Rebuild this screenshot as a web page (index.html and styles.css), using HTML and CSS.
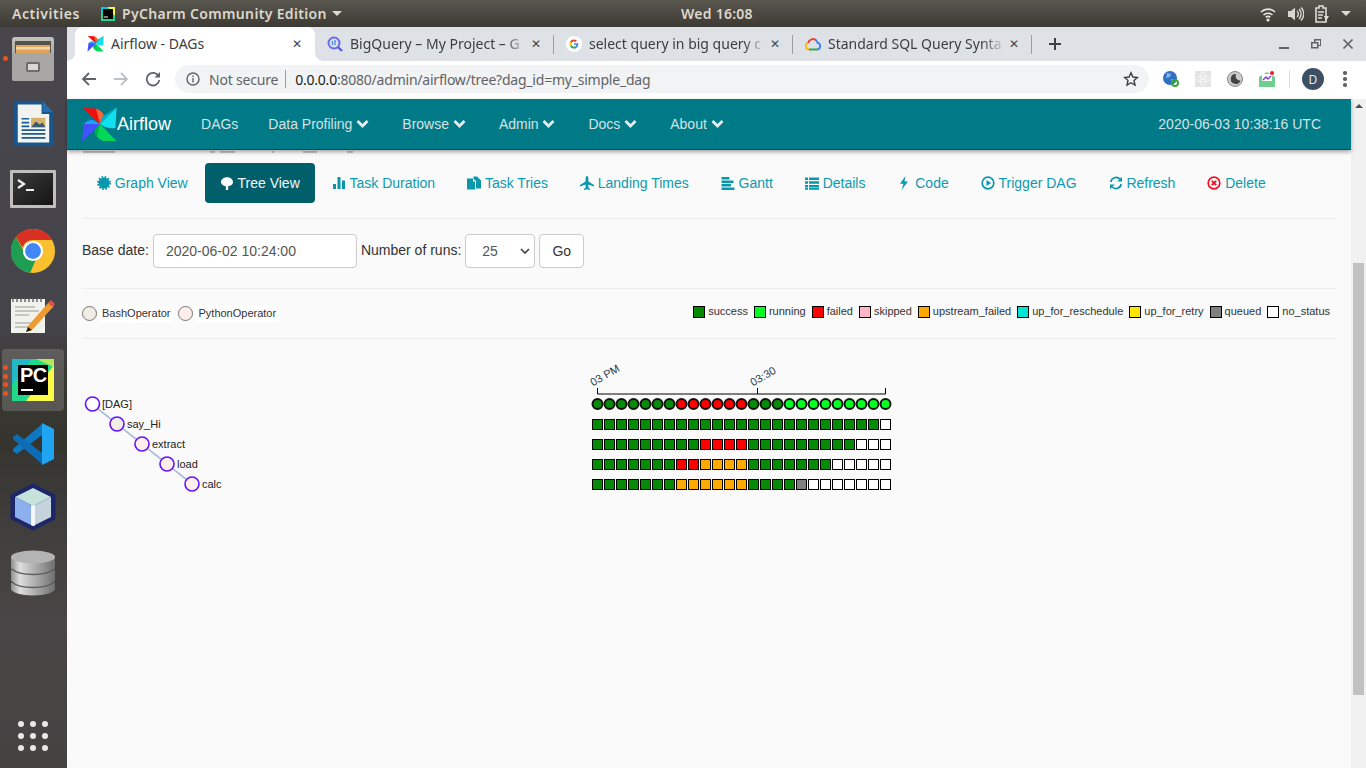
FILE: index.html
```html
<!DOCTYPE html>
<html lang="en">
<head>
<meta charset="utf-8">
<title>Airflow - DAGs</title>
<link rel="stylesheet" href="styles.css">
</head>
<body>
<div class="screen">
  <header class="topbar">
    <div class="top-left">
      <span class="activities">Activities</span>
      <svg class="top-app-icon" width="14" height="14" viewBox="0 0 14 14"><rect width="14" height="14" fill="#21d789"/><path d="M7 0h7v9z" fill="#fcf84a"/><path d="M0 0h7L0 7z" fill="#07c3f2"/><rect x="2" y="2" width="10" height="10" fill="#000"/><rect x="3" y="9.500" width="4" height="1" fill="#fff"/></svg>
      <span class="appname">PyCharm Community Edition</span>
      <span class="caret"></span>
    </div>
    <span class="clock">Wed 16:08</span>
    <div class="top-right">
      <svg width="18" height="16" viewBox="0 0 18 16"><path d="M2 6a10 10 0 0 1 14 0M4.500 9a6.500 6.500 0 0 1 9 0" fill="none" stroke="#e8e6df" stroke-width="1.600"/><path d="M6.800 11.300a3.400 3.400 0 0 1 4.400 0" fill="none" stroke="#e8e6df" stroke-width="1.600"/><circle cx="9" cy="14" r="1.600" fill="#e8e6df"/></svg>
      <svg width="16" height="16" viewBox="0 0 16 16"><path d="M0 5h3l4-3.500v13L3 11H0z" fill="#d8d6cf"/><path d="M9 5a4 4 0 0 1 0 6M11 3a7 7 0 0 1 0 10M13 1.500a9 9 0 0 1 0 13" fill="none" stroke="#d8d6cf" stroke-width="1.400"/></svg>
      <svg width="15" height="18" viewBox="0 0 15 18"><path d="M1 3h3V1h4v2h3v14H1z" fill="none" stroke="#e0ded7" stroke-width="1.600"/><path d="M3 7h6M3 10h5M3 13h4" stroke="#e0ded7" stroke-width="1.400"/><path d="M9 11l5 0-3 5z" fill="#e0ded7"/></svg>
      <span class="caret"></span>
    </div>
  </header>
  <div class="desktop">
    <nav class="dock">
      <div class="dock-item dock-files">
        <i class="run-dot"></i>
        <svg width="42" height="44" viewBox="0 0 42 44"><defs><linearGradient id="cab" x1="0" y1="0" x2="0" y2="1"><stop offset="0" stop-color="#c4c2bd"/><stop offset="1" stop-color="#8d8b87"/></linearGradient></defs><rect x="0" y="0" width="42" height="44" rx="3" fill="url(#cab)"/><rect x="3" y="4" width="36" height="12" fill="#55524e"/><rect x="4" y="8" width="34" height="8" fill="#e0a35a"/><rect x="4" y="10" width="34" height="2.500" fill="#f3d9a8"/><rect x="0" y="16" width="42" height="28" rx="2" fill="#a9a7a3"/><rect x="14" y="25" width="14" height="10" rx="2" fill="#6f6d6a"/><rect x="16" y="27" width="10" height="6" fill="#d9d7d3"/></svg>
      </div>
      <div class="dock-item dock-writer">
        <svg width="40" height="47" viewBox="0 0 42 48"><path d="M1 2a2 2 0 0 1 2-2h27l12 12v34a2 2 0 0 1-2 2H3a2 2 0 0 1-2-2z" fill="#18568c"/><path d="M5 4h25v10h8v30H5z" fill="#f3f3f0"/><path d="M31 0l11 12H31z" fill="#236fae"/><rect x="19" y="18" width="15" height="10" fill="#d4b36e"/><path d="M19 28l5-6 4 3 3-2 3 5z" fill="#3c5a6e"/><path d="M9 19h8M9 23h8M9 27h8M9 31h25M9 35h25M9 39h25" stroke="#1d5a8e" stroke-width="1.800"/></svg>
      </div>
      <div class="dock-item dock-term">
        <svg width="46" height="38" viewBox="0 0 46 38"><defs><linearGradient id="term" x1="0" y1="0" x2="1" y2="1"><stop offset="0" stop-color="#3c3c3c"/><stop offset="1" stop-color="#141414"/></linearGradient></defs><rect x="0" y="0" width="46" height="38" rx="1" fill="#bfbfbc"/><rect x="3" y="3" width="40" height="32" fill="url(#term)"/><path d="M8 10l6 4-6 4" fill="none" stroke="#f0f0f0" stroke-width="2.200"/><rect x="16" y="19" width="8" height="2" fill="#f0f0f0"/></svg>
      </div>
      <div class="dock-item dock-chrome">
        <svg width="44" height="44" viewBox="0 0 48 48"><circle cx="24" cy="24" r="24" fill="#fbc02d"/><path d="M24 0a24 24 0 0 1 20.800 12H24a12 12 0 0 0-11.400 8.200L5.200 8.600A24 24 0 0 1 24 0z" fill="#d93025"/><path d="M5.200 8.600l11 19.400a9 9 0 0 0 11 5L21 47.800A24 24 0 0 1 5.200 8.600z" fill="#1e9e50"/><circle cx="24" cy="24" r="11" fill="#fff"/><circle cx="24" cy="24" r="8.600" fill="#4285f4"/></svg>
      </div>
      <div class="dock-item dock-notes">
        <svg width="46" height="38" viewBox="0 0 46 38"><rect x="1" y="3" width="34" height="34" fill="#f2f2ec"/><path d="M3 1v5M7 1v5M11 1v5M15 1v5M19 1v5M23 1v5M27 1v5M31 1v5" stroke="#555" stroke-width="1.300"/><path d="M5 11h20M5 15h24M5 19h14M5 27h22M5 31h16" stroke="#9a9a94" stroke-width="1"/><path d="M18 30L39 6l5 4-22 24-6 2z" fill="#ef9b2d"/><path d="M38 7l3-3 4 4-3 3z" fill="#d9534f"/><path d="M16 36l2-5 4 3z" fill="#222"/></svg>
      </div>
      <div class="dock-item dock-pc">
        <i class="run-dots"><b></b><b></b><b></b><b></b></i>
        <svg width="42" height="42" viewBox="0 0 42 42"><rect width="42" height="42" fill="#21d789"/><path d="M24 0h18v8z" fill="#b4e85a"/><path d="M42 6v36H14z" fill="#fcf84a"/><path d="M0 0h20L0 26z" fill="#20b9c5"/><rect x="6" y="6" width="30" height="30" fill="#000"/><text x="8" y="23" class="pc-text">PC</text><rect x="9" y="30" width="12" height="2" fill="#fff"/></svg>
      </div>
      <div class="dock-item dock-code">
        <svg width="42" height="42" viewBox="0 0 42 42"><path d="M30 1L30 12 5 31 1 28V26z" fill="#0f78c2"/><path d="M30 41V30L5 11 1 14V16z" fill="#0d6cb3"/><path d="M30 0l12 6v30l-12 6z" fill="#1fa5f2"/></svg>
      </div>
      <div class="dock-item dock-cube">
        <svg width="46" height="48" viewBox="0 0 46 48"><path class="cube-outer" d="M23 2.500L43.500 13V35L23 45.500 2.500 35V13z"/><path d="M23 5l18 9-18 9L5 14z" fill="#c6e2dc"/><path d="M5 14l18 9v20L5 34z" fill="#8cb0ee"/><path d="M23 23l18-9v20L23 43z" fill="#c5d4dc"/><path d="M21 22.500l4-.5v20.500l-2 .5-2-1z" fill="#f4f8fb"/></svg>
      </div>
      <div class="dock-item dock-db">
        <svg width="44" height="46" viewBox="0 0 44 46"><defs><linearGradient id="dbg" x1="0" y1="0" x2="1" y2="0"><stop offset="0" stop-color="#8f8f8f"/><stop offset=".2" stop-color="#dedede"/><stop offset="1" stop-color="#6f6f6f"/></linearGradient></defs><path d="M0 33v6c0 3 10 6.500 22 6.500S44 42 44 39v-6z" fill="url(#dbg)"/><path d="M0 20v10c0 3 10 6 22 6s22-3 22-6V20z" fill="url(#dbg)"/><path d="M0 7v11c0 3 10 6 22 6s22-3 22-6V7z" fill="url(#dbg)"/><ellipse cx="22" cy="7" rx="22" ry="6.500" fill="#b4b4b4"/><path d="M1 19c3 3 11 5.500 21 5.500S40 22 43 19M1 32c3 3 11 5.500 21 5.500S40 35 43 32" fill="none" stroke="#5e5d5d" stroke-width="1.400"/></svg>
      </div>
      <div class="app-grid"><i></i><i></i><i></i><i></i><i></i><i></i><i></i><i></i><i></i></div>
    </nav>
    <div class="browser">
      <div class="tabstrip">
        <div class="tab active">
          <svg class="fav" width="17" height="17" viewBox="0 0 36 36"><use href="#pinwheel"/></svg>
          <span class="tab-title">Airflow - DAGs</span>
          <span class="tab-x">✕</span>
        </div>
        <div class="tab">
          <svg class="fav" width="16" height="16" viewBox="0 0 16 16"><circle cx="7" cy="7" r="5.500" fill="none" stroke="#6a6ce8" stroke-width="2"/><path d="M11 11l4 4" stroke="#5b5fdc" stroke-width="2.400"/><path d="M5.500 5v4M8 4v5" stroke="#4285f4" stroke-width="1.300"/></svg>
          <span class="tab-title">BigQuery – My Project – G</span>
          <span class="tab-x">✕</span>
        </div>
        <i class="tab-sep"></i>
        <div class="tab">
          <svg class="fav" width="16" height="16" viewBox="0 0 16 16"><circle cx="8" cy="8" r="8" fill="#fff"/><path d="M8 3.600a4.400 4.400 0 0 1 3 1.200l-1.300 1.300A2.600 2.600 0 0 0 5.600 7L4 5.800A4.400 4.400 0 0 1 8 3.600z" fill="#ea4335"/><path d="M4 5.800L5.600 7a2.700 2.700 0 0 0 0 2L4 10.200a4.500 4.500 0 0 1 0-4.400z" fill="#fbbc05"/><path d="M4 10.200L5.600 9a2.600 2.600 0 0 0 3.900 1.200l1.500 1.200A4.400 4.400 0 0 1 4 10.200z" fill="#34a853"/><path d="M12.300 8.100c0 1.400-.5 2.500-1.300 3.300L9.500 10.200c.5-.3.8-.8.9-1.400H8V7.300h4.200z" fill="#4285f4"/></svg>
          <span class="tab-title">select query in big query c</span>
          <span class="tab-x">✕</span>
        </div>
        <i class="tab-sep"></i>
        <div class="tab">
          <svg class="fav" width="16" height="16" viewBox="0 0 16 16"><path d="M4 13.500a3.500 3.500 0 0 1-.6-6.900" fill="none" stroke="#fbbc05" stroke-width="2"/><path d="M3.200 7A4.800 4.800 0 0 1 11 4.200" fill="none" stroke="#ea4335" stroke-width="2"/><path d="M10.600 4a4.500 4.500 0 0 1 2 2.800 3.400 3.400 0 0 1-.6 6.700" fill="none" stroke="#4285f4" stroke-width="2"/><path d="M4 13.500h8" stroke="#34a853" stroke-width="2"/></svg>
          <span class="tab-title">Standard SQL Query Synta</span>
          <span class="tab-x">✕</span>
        </div>
        <i class="tab-sep"></i>
        <svg class="new-tab" width="14" height="14" viewBox="0 0 14 14"><path d="M7 1v12M1 7h12" stroke="#3c4043" stroke-width="2"/></svg>
        <div class="win-ctrls">
          <svg width="12" height="12" viewBox="0 0 12 12"><rect x="1" y="9" width="10" height="2" fill="#5f6368"/></svg>
          <svg width="12" height="12" viewBox="0 0 12 12"><path d="M4 1h7v7H8.500v2.500H1V4h3z M5.500 2.500V4h3v3H10V2.500z" fill="#5f6368" fill-rule="evenodd"/><rect x="2.500" y="5.500" width="4.500" height="3.500" fill="#dee1e6"/></svg>
          <svg width="12" height="12" viewBox="0 0 12 12"><path d="M1.500 1.500l9 9M10.500 1.500l-9 9" stroke="#5f6368" stroke-width="1.700"/></svg>
        </div>
      </div>
      <div class="toolbar">
        <svg class="tb-btn" width="16" height="16" viewBox="0 0 16 16"><path d="M15 8H2M8 2L2 8l6 6" fill="none" stroke="#5f6368" stroke-width="1.800"/></svg>
        <svg class="tb-btn" width="16" height="16" viewBox="0 0 16 16"><path d="M1 8h13M8 2l6 6-6 6" fill="none" stroke="#bdc1c6" stroke-width="1.800"/></svg>
        <svg class="tb-btn" width="16" height="16" viewBox="0 0 16 16"><path d="M13.500 5A6.300 6.300 0 1 0 14.300 9" fill="none" stroke="#5f6368" stroke-width="1.800"/><path d="M15 1v5.500H9.500z" fill="#5f6368"/></svg>
        <div class="omnibox">
          <svg class="info" width="14" height="14" viewBox="0 0 14 14"><circle cx="7" cy="7" r="6" fill="none" stroke="#5f6368" stroke-width="1.400"/><rect x="6.300" y="6" width="1.400" height="4.500" fill="#5f6368"/><rect x="6.300" y="3.500" width="1.400" height="1.500" fill="#5f6368"/></svg>
          <span class="not-secure">Not secure</span>
          <i class="omni-sep"></i>
          <span class="url"><b>0.0.0.0</b>:8080/admin/airflow/tree?dag_id=my_simple_dag</span>
          <svg class="star" width="16" height="16" viewBox="0 0 16 16"><path d="M8 1.800l1.900 4.200 4.500.5-3.400 3 1 4.500L8 11.700 4 14l1-4.500-3.400-3 4.500-.5z" fill="none" stroke="#3c4043" stroke-width="1.400"/></svg>
        </div>
        <div class="extensions">
          <svg width="16" height="16" viewBox="0 0 16 16"><circle cx="7" cy="7" r="7" fill="#2f6fc4"/><path d="M4 2l4 1-1 3-4 1zM8 8l3 1-2 4z" fill="#7fb4e8"/><circle cx="12" cy="12" r="3" fill="none" stroke="#3aa535" stroke-width="2"/></svg>
          <svg width="16" height="16" viewBox="0 0 16 16"><rect width="16" height="16" fill="#e4e4e4"/><g fill="none" stroke="#f7f7f7"><ellipse cx="8" cy="8" rx="7" ry="3"/><ellipse cx="8" cy="8" rx="3" ry="7"/></g><circle cx="8" cy="8" r="1.500" fill="#f7f7f7"/></svg>
          <svg width="16" height="16" viewBox="0 0 16 16"><circle cx="8" cy="8" r="7.500" fill="#ccc" stroke="#888"/><path d="M9 3a5 5 0 1 0 4.500 6.500A4.500 4.500 0 0 1 9 3z" fill="#444"/></svg>
          <svg width="16" height="16" viewBox="0 0 16 16"><path d="M0 6l8-5 8 5v10H0z" fill="#6fcf8f"/><rect x="3" y="3" width="10" height="7" fill="#fff"/><path d="M4 9l3-3 2 2 3-3" fill="none" stroke="#7a3fd0" stroke-width="1.400"/><circle cx="13" cy="2" r="2" fill="#f0142f"/></svg>
        </div>
        <i class="ext-sep"></i>
        <span class="avatar">D</span>
        <span class="kebab"><i></i><i></i><i></i></span>
      </div>
      <div class="viewport">
        <div class="page">
          <div class="navbar">
            <svg class="logo" width="36" height="36" viewBox="0 0 36 36"><g id="pinwheel"><path d="M1.500 2L15 2.500Q24 6 22.500 12L19 18z" fill="#f00e0e"/><path d="M15 2.500Q24 6 22.500 12L19 18z" fill="#f4663c"/><path d="M35.500 1.500L19 18l5 3q6 2 10.500 1z" fill="#11dfee"/><path d="M35.500 1.500L21 11l-2 7z" fill="#00b3c7"/><path d="M19 18l16.500 17H22Q13 31 14 24z" fill="#04d659"/><path d="M19 18L14 24q-1 4 2 7z" fill="#00ad46"/><path d="M1 35.500L19 18l-7-4q-6 0-9 4z" fill="#4352ff"/><path d="M19 18l-7-4q-6 0-9 4z" fill="#1fa2f5"/></g></svg>
            <span class="brand">Airflow</span>
            <ul class="nav-menu">
              <li>DAGs</li>
              <li>Data Profiling<svg class="chev" width="16" height="10" viewBox="0 0 16 10"><path d="M1.500 2l5 5 5-5"/></svg></li>
              <li>Browse<svg class="chev" width="16" height="10" viewBox="0 0 16 10"><path d="M1.500 2l5 5 5-5"/></svg></li>
              <li>Admin<svg class="chev" width="16" height="10" viewBox="0 0 16 10"><path d="M1.500 2l5 5 5-5"/></svg></li>
              <li>Docs<svg class="chev" width="16" height="10" viewBox="0 0 16 10"><path d="M1.500 2l5 5 5-5"/></svg></li>
              <li>About<svg class="chev" width="16" height="10" viewBox="0 0 16 10"><path d="M1.500 2l5 5 5-5"/></svg></li>
            </ul>
            <span class="utc">2020-06-03 10:38:16 UTC</span>
          </div>
          <div class="content">
            <div class="clipped"><i class="c1"></i><i class="c2"></i><i class="c3"></i><i class="c4"></i><i class="c5"></i><i class="c6"></i></div>
            <ul class="pills">
              <li><svg width="14" height="14" viewBox="0 0 14 14"><circle cx="7" cy="7" r="5.500"/><circle class="teeth" cx="7" cy="7" r="6"/></svg>Graph View</li>
              <li class="on"><svg width="14" height="14" viewBox="0 0 14 14"><path d="M7 1.200c3.500 0 6 2.200 6 4.800s-2.500 4-4.800 4.200V14H5.800v-3.800C3.500 10 1 8.600 1 6s2.500-4.800 6-4.800z"/></svg>Tree View</li>
              <li><svg width="14" height="14" viewBox="0 0 14 14"><rect x="1" y="8" width="3" height="5"/><rect x="5.500" y="1" width="3" height="12"/><rect x="10" y="4.500" width="3" height="8.500"/></svg>Task Duration</li>
              <li><svg width="14" height="14" viewBox="0 0 14 14"><path d="M0 2.500h6v3h2V13.500H0z"/><path d="M6.500 0.500h3.500l4 4v8h-5V5l-2.500-2z"/></svg>Task Tries</li>
              <li><svg width="14" height="14" viewBox="0 0 14 14"><path d="M7 0c1 0 1.400 1.500 1.400 3v2.500L14 9v1.500L8.400 8.500v3L10 13v1l-3-.8L4 14v-1l1.600-1.500v-3L0 10.500V9l5.600-3.500V3C5.600 1.500 6 0 7 0z"/></svg>Landing Times</li>
              <li><svg width="14" height="14" viewBox="0 0 14 14"><rect x="0.500" y="1" width="8" height="2.500"/><rect x="0.500" y="4.500" width="12" height="2.500"/><rect x="0.500" y="8" width="9.500" height="2.500"/><rect x="0.500" y="11.500" width="13" height="2.500"/></svg>Gantt</li>
              <li><svg width="14" height="14" viewBox="0 0 14 14"><path d="M0 1.500h3v2.500H0zM0 5.200h3v2.500H0zM0 8.900h3v2.500H0zM0 12h3v1.800H0zM4 1.500h10v2.500H4zM4 5.200h10v2.500H4zM4 8.900h10v2.500H4zM4 12h10v1.800H4z"/></svg>Details</li>
              <li><svg width="14" height="14" viewBox="0 0 14 14"><path d="M8.500 0L3 7.800h3.500L4.500 14 11 5.500H7.500z"/></svg>Code</li>
              <li><svg width="14" height="14" viewBox="0 0 14 14"><circle class="ring" cx="7" cy="7" r="5.800"/><path d="M5.500 4l4.500 3-4.500 3z"/></svg>Trigger DAG</li>
              <li><svg width="14" height="14" viewBox="0 0 14 14"><path class="ring" d="M1.800 6A5.300 5.300 0 0 1 11 3.300M12.200 8A5.300 5.300 0 0 1 3 10.700"/><path d="M13 .8v4.700H8.300zM1 13.200V8.500h4.700z"/></svg>Refresh</li>
              <li class="del"><svg width="14" height="14" viewBox="0 0 14 14"><circle class="ring" cx="7" cy="7" r="5.800"/><path class="x" d="M4.800 4.800l4.400 4.400M9.200 4.800L4.800 9.200"/></svg>Delete</li>
            </ul>
            <hr>
            <form class="dateform">
              <label>Base date:</label>
              <span class="field date">2020-06-02 10:24:00</span>
              <label>Number of runs:</label>
              <span class="field runs">25<svg width="10" height="6" viewBox="0 0 10 6"><path d="M1 1l4 4 4-4" fill="none" stroke="#444" stroke-width="1.700"/></svg></span>
              <span class="go">Go</span>
            </form>
            <hr>
            <div class="legend">
              <div class="ops">
                <i class="op bash"></i><span>BashOperator</span>
                <i class="op python"></i><span>PythonOperator</span>
              </div>
              <div class="states">
                <i class="sw success"></i><span>success</span>
                <i class="sw running"></i><span>running</span>
                <i class="sw failed"></i><span>failed</span>
                <i class="sw skipped"></i><span>skipped</span>
                <i class="sw upstream"></i><span>upstream_failed</span>
                <i class="sw resched"></i><span>up_for_reschedule</span>
                <i class="sw retry"></i><span>up_for_retry</span>
                <i class="sw queued"></i><span>queued</span>
                <i class="sw none"></i><span>no_status</span>
              </div>
            </div>
            <hr>
            <svg class="tree" width="1254" height="429" viewBox="82 339 1254 429">
              <path class="link" d="M92 404C104 414 105 414 117 424S130 434 142 444 155 454 167 464 180 474 192 484"/>
              <circle class="node blank" cx="92.500" cy="404" r="7"/><text class="lbl" x="102" y="408">[DAG]</text>
              <circle class="node bash" cx="117" cy="424" r="7"/><text class="lbl" x="127" y="428">say_Hi</text>
              <circle class="node python" cx="142" cy="444" r="7"/><text class="lbl" x="152" y="448">extract</text>
              <circle class="node python" cx="167" cy="464" r="7"/><text class="lbl" x="177" y="468">load</text>
              <circle class="node python" cx="192" cy="484" r="7"/><text class="lbl" x="202" y="488">calc</text>

              <path class="axis" d="M597.500 388V394H885.500V388M757.500 394V388"/>
              <text class="tick" transform="translate(593 386.500) rotate(-30)">03 PM</text>
              <text class="tick" transform="translate(753 386.500) rotate(-30)">03:30</text>

              <g class="dots">
                <circle class="s" cx="597.500"/><circle class="s" cx="609.500"/><circle class="s" cx="621.500"/><circle class="s" cx="633.500"/><circle class="s" cx="645.500"/><circle class="s" cx="657.500"/><circle class="s" cx="669.500"/><circle class="f" cx="681.500"/><circle class="f" cx="693.500"/><circle class="f" cx="705.500"/><circle class="f" cx="717.500"/><circle class="f" cx="729.500"/><circle class="f" cx="741.500"/><circle class="s" cx="753.500"/><circle class="s" cx="765.500"/><circle class="s" cx="777.500"/><circle class="l" cx="789.500"/><circle class="l" cx="801.500"/><circle class="l" cx="813.500"/><circle class="l" cx="825.500"/><circle class="l" cx="837.500"/><circle class="l" cx="849.500"/><circle class="l" cx="861.500"/><circle class="l" cx="873.500"/><circle class="l" cx="885.500"/>
              </g>
              <g class="cells r1">
                <rect class="s" x="592.500"/><rect class="s" x="604.500"/><rect class="s" x="616.500"/><rect class="s" x="628.500"/><rect class="s" x="640.500"/><rect class="s" x="652.500"/><rect class="s" x="664.500"/><rect class="s" x="676.500"/><rect class="s" x="688.500"/><rect class="s" x="700.500"/><rect class="s" x="712.500"/><rect class="s" x="724.500"/><rect class="s" x="736.500"/><rect class="s" x="748.500"/><rect class="s" x="760.500"/><rect class="s" x="772.500"/><rect class="s" x="784.500"/><rect class="s" x="796.500"/><rect class="s" x="808.500"/><rect class="s" x="820.500"/><rect class="s" x="832.500"/><rect class="s" x="844.500"/><rect class="s" x="856.500"/><rect class="s" x="868.500"/><rect class="n" x="880.500"/>
              </g>
              <g class="cells r2">
                <rect class="s" x="592.500"/><rect class="s" x="604.500"/><rect class="s" x="616.500"/><rect class="s" x="628.500"/><rect class="s" x="640.500"/><rect class="s" x="652.500"/><rect class="s" x="664.500"/><rect class="s" x="676.500"/><rect class="s" x="688.500"/><rect class="f" x="700.500"/><rect class="f" x="712.500"/><rect class="f" x="724.500"/><rect class="f" x="736.500"/><rect class="s" x="748.500"/><rect class="s" x="760.500"/><rect class="s" x="772.500"/><rect class="s" x="784.500"/><rect class="s" x="796.500"/><rect class="s" x="808.500"/><rect class="s" x="820.500"/><rect class="s" x="832.500"/><rect class="s" x="844.500"/><rect class="n" x="856.500"/><rect class="n" x="868.500"/><rect class="n" x="880.500"/>
              </g>
              <g class="cells r3">
                <rect class="s" x="592.500"/><rect class="s" x="604.500"/><rect class="s" x="616.500"/><rect class="s" x="628.500"/><rect class="s" x="640.500"/><rect class="s" x="652.500"/><rect class="s" x="664.500"/><rect class="f" x="676.500"/><rect class="f" x="688.500"/><rect class="u" x="700.500"/><rect class="u" x="712.500"/><rect class="u" x="724.500"/><rect class="u" x="736.500"/><rect class="s" x="748.500"/><rect class="s" x="760.500"/><rect class="s" x="772.500"/><rect class="s" x="784.500"/><rect class="s" x="796.500"/><rect class="s" x="808.500"/><rect class="s" x="820.500"/><rect class="n" x="832.500"/><rect class="n" x="844.500"/><rect class="n" x="856.500"/><rect class="n" x="868.500"/><rect class="n" x="880.500"/>
              </g>
              <g class="cells r4">
                <rect class="s" x="592.500"/><rect class="s" x="604.500"/><rect class="s" x="616.500"/><rect class="s" x="628.500"/><rect class="s" x="640.500"/><rect class="s" x="652.500"/><rect class="s" x="664.500"/><rect class="u" x="676.500"/><rect class="u" x="688.500"/><rect class="u" x="700.500"/><rect class="u" x="712.500"/><rect class="u" x="724.500"/><rect class="u" x="736.500"/><rect class="s" x="748.500"/><rect class="s" x="760.500"/><rect class="s" x="772.500"/><rect class="s" x="784.500"/><rect class="q" x="796.500"/><rect class="n" x="808.500"/><rect class="n" x="820.500"/><rect class="n" x="832.500"/><rect class="n" x="844.500"/><rect class="n" x="856.500"/><rect class="n" x="868.500"/><rect class="n" x="880.500"/>
              </g>
            </svg>
          </div>
        </div>
        <div class="scrollbar">
          <span class="arrow"></span>
          <span class="thumb"></span>
        </div>
      </div>
    </div>
  </div>
</div>
</body>
</html>
```
FILE: styles.css
```css
* { box-sizing: border-box; }
html, body { margin: 0; height: 768px; overflow: hidden; }
body { font-family: "Liberation Sans", Arial, sans-serif; background: #3d3b37; }
ul { margin: 0; padding: 0; list-style: none; }
i { display: block; font-style: normal; }

.screen { width: 1366px; height: 768px; display: flex; flex-direction: column; }

/* GNOME top bar */
.topbar { height: 27px; flex: none; display: flex; align-items: center; background: linear-gradient(#5a574f, #3c3a34); color: #dcd8cc; font: 600 14px "Noto Sans", sans-serif; letter-spacing: .25px; }
.top-left { width: 681px; display: flex; align-items: center; padding-left: 12px; }
.activities { letter-spacing: .55px; }
.appname { letter-spacing: .33px; }
.top-app-icon { margin-left: 21px; margin-right: 7px; }
.caret { width: 0; height: 0; border-left: 5px solid transparent; border-right: 5px solid transparent; border-top: 5px solid #dcd8cc; }
.top-left .caret { margin-left: 5px; }
.top-right { margin-left: auto; display: flex; align-items: center; gap: 11px; padding-right: 15px; }

.desktop { flex: 1; display: flex; min-height: 0; }

/* Dock */
.dock { width: 67px; flex: none; position: relative; display: flex; flex-direction: column; align-items: flex-start; padding-left: 2px; background: linear-gradient(#48464c 0, #45444a 40%, #3b3934 47%, #36342f 56%, #3f3d3c 66%, #4a4546 80%, #444342 100%); }
.dock-item { width: 62px; display: flex; justify-content: center; align-items: center; position: relative; }
.dock-files { margin-top: 10px; height: 44px; }
.dock-writer { margin-top: 19px; height: 47px; }
.dock-term { margin-top: 23px; height: 38px; }
.dock-chrome { margin-top: 21px; height: 44px; }
.dock-notes { margin-top: 23px; height: 38px; }
.dock-pc { margin-top: 15px; height: 62px; background: rgba(255,255,255,.16); border-radius: 4px; }
.dock-code { margin-top: 12px; height: 42px; }
.dock-cube { margin-top: 18px; height: 48px; }
.dock-db { margin-top: 19px; height: 46px; }
.run-dot { position: absolute; left: 1px; top: 18.500px; width: 5px; height: 5px; border-radius: 50%; background: #e95420; }
.run-dots { position: absolute; left: 1px; top: 16px; display: flex; flex-direction: column; gap: 3.700px; }
.run-dots b { display: block; width: 5px; height: 5px; border-radius: 50%; background: #e95420; }
.pc-text { font: 700 20px "Liberation Sans", sans-serif; letter-spacing: -.5px; fill: #fff; }
.cube-outer { fill: #1d2668; stroke: #1d2668; stroke-width: 4; stroke-linejoin: round; }
.app-grid { position: absolute; left: 18px; top: 694px; display: grid; grid-template-columns: repeat(3, 6px); gap: 6px; }
.app-grid i { width: 6px; height: 6px; border-radius: 50%; background: #e8e8e8; }

/* Browser */
.browser { flex: 1; min-width: 0; display: flex; flex-direction: column; background: #fff; }
.tabstrip { height: 34px; flex: none; display: flex; align-items: center; padding-left: 8px; background: #dee1e6; font: 14px "Noto Sans", sans-serif; color: #3c4043; }
.tab { width: 239px; height: 34px; flex: none; display: flex; align-items: center; padding-left: 12px; position: relative; }
.tab.active { background: #fff; border-radius: 8px 8px 0 0; width: 240px; }
.tab.active::before, .tab.active::after { content: ""; position: absolute; bottom: 0; width: 8px; height: 8px; }
.tab.active::before { left: -8px; background: radial-gradient(circle at 0 0, transparent 7.500px, #fff 8px); }
.tab.active::after { right: -8px; background: radial-gradient(circle at 100% 0, transparent 7.500px, #fff 8px); }
.fav { flex: none; margin-right: 7px; margin-bottom: 1px; }
.tab-title { width: 177px; flex: none; white-space: nowrap; overflow: hidden; margin-bottom: 2px; -webkit-mask-image: linear-gradient(90deg, #000 155px, transparent 177px); mask-image: linear-gradient(90deg, #000 155px, transparent 177px); }
.tab.active .tab-title { -webkit-mask-image: none; mask-image: none; }
.tab-x { width: 14px; margin-left: 2px; margin-bottom: 1px; font: 12px "DejaVu Sans", sans-serif; color: #45474b; text-align: center; }
.tab-sep { width: 1px; height: 19px; background: #9a9da2; margin-left: -1px; flex: none; }
.new-tab { margin-left: 16px; }
.win-ctrls { margin-left: auto; display: flex; gap: 20px; padding-right: 12px; }

.toolbar { height: 38px; flex: none; display: flex; align-items: center; padding: 0 0 2px 14px; background: #fff; }
.tb-btn { margin-right: 16px; }
.tb-btn + .omnibox { margin-left: -2px; }
.omnibox { width: 974px; height: 28px; border-radius: 14px; background: #f1f3f4; display: flex; align-items: center; padding-left: 11px; font: 14px "Noto Sans", sans-serif; color: #5f6368; }
.info { margin-right: 9px; }
.not-secure { letter-spacing: -.2px; }
.omni-sep { width: 1px; height: 18px; background: #9aa0a6; margin: 0 9px 0 7px; }
.url { white-space: nowrap; letter-spacing: -.22px; }
.url b { font-weight: 400; color: #202124; }
.star { margin-left: auto; margin-right: 10px; }
.extensions { display: flex; gap: 16px; margin-left: 14px; }
.ext-sep { width: 1px; height: 18px; background: #dadce0; margin-left: 14px; }
.avatar { width: 22px; height: 22px; border-radius: 50%; background: #3c4f63; color: #e8eaed; font: 12px "Noto Sans", sans-serif; display: flex; align-items: center; justify-content: center; margin-left: 12px; }
.kebab { display: flex; flex-direction: column; gap: 2.600px; margin-left: 19px; }
.kebab i { width: 3.500px; height: 3.500px; border-radius: 50%; background: #5f6368; }

.viewport { flex: 1; min-height: 0; display: flex; }
.page { flex: 1; min-width: 0; display: flex; flex-direction: column; background: #fafafa; }

/* Navbar */
.navbar { height: 51px; flex: none; display: flex; align-items: center; padding: 0 30px 0 14px; background: #007a87; border-bottom: 1px solid #00525c; box-shadow: 0 2px 4px rgba(0,0,0,.35); position: relative; z-index: 1; color: #d5e2e3; font-size: 14px; }
.logo { flex: none; }
.brand { font-size: 18px; color: #fff; margin-right: 30px; }
.nav-menu { display: flex; gap: 30px; }
.nav-menu li { display: flex; align-items: center; white-space: nowrap; }
.chev { margin-left: 3.900px; }
.chev path { fill: none; stroke: #e8eeef; stroke-width: 2.800; }
.utc { margin-left: auto; }

/* Content */
.content { flex: 1; padding: 0 15px; color: #333; font-size: 14px; min-height: 0; }
hr { height: 1px; border: 0; margin: 0; background: #eee; }
.clipped { height: 13px; display: flex; align-items: flex-start; padding-top: 1px; }
.clipped i { height: 2px; background: #c5c7c8; }
.c1 { width: 32px; margin-left: 1px; }
.c2 { width: 5px; margin-left: 95px; }
.c3 { width: 15px; margin-left: 5px; }
.c4 { width: 2px; margin-left: 37px; }
.c5 { width: 14px; margin-left: 29px; }
.c6 { width: 6px; margin-left: 30px; }

.pills { display: flex; gap: 2px; height: 40px; margin-bottom: 15px; color: #0b9ab0; }
.pills li { display: flex; align-items: center; padding: 0 15px; line-height: 20px; border-radius: 4px; white-space: nowrap; }
.pills svg { margin-right: 3.800px; fill: #0897ab; flex: none; }
.pills .teeth { fill: none; stroke: #0897ab; stroke-width: 2; stroke-dasharray: 1.570 1.570; }
.pills .ring { fill: none; stroke: #0897ab; stroke-width: 1.700; }
.pills .on { background: #005f6b; color: #f4f8f8; }
.pills .on svg { fill: #fff; }
.pills .del svg .ring, .pills .del svg .x { stroke: #f50d1f; fill: none; }
.pills .del .x { stroke-width: 1.900; }

.dateform { display: flex; align-items: center; height: 34px; margin: 15px 0 20px; }
.dateform label { margin-right: 4px; margin-bottom: 2px; }
.field { height: 34px; background: #fff; border: 1px solid #ccc; border-radius: 4px; display: flex; align-items: center; color: #555; }
.date { width: 204px; padding-left: 12px; margin-right: 4px; }
.runs { width: 70px; padding-left: 16px; margin-right: 4px; justify-content: space-between; padding-right: 4px; }
.go { width: 45px; height: 34px; background: #fff; border: 1px solid #ccc; border-radius: 4px; display: flex; align-items: center; justify-content: center; color: #333; }

.legend { height: 49px; display: flex; align-items: center; justify-content: space-between; font-size: 11px; color: #333; }
.ops { display: flex; align-items: center; }
.ops span { background: #fff; border-radius: 4px; padding: 2px 4px 4px; margin-left: 1px; margin-right: 4px; }
.op { width: 15px; height: 15px; border-radius: 50%; border: 1px solid #777; }
.op.bash { background: #f0ede4; }
.op.python { background: #ffefeb; }
.states { display: flex; align-items: center; padding-right: 6px; margin-bottom: 3px; }
.sw { width: 12px; height: 12px; border: 1px solid #000; margin-right: 3px; }
.states span { margin-right: 6px; padding-bottom: 2px; }
.states span:last-child { margin-right: 0; }
.success { background: #008a00; }
.running { background: #00ff22; }
.failed { background: #f00; }
.skipped { background: #ffb6c8; }
.upstream { background: #ffa800; }
.resched { background: #00e6d2; }
.retry { background: #ffe600; }
.queued { background: #808080; }
.none { background: #fff; }

/* Tree */
.tree { display: block; }
.link { fill: none; stroke: #a8bddb; stroke-width: 1.600; }
.node { stroke: #6210ff; stroke-width: 1.600; }
.node.blank { fill: #fff; }
.node.bash { fill: #f0ede4; }
.node.python { fill: #ffefeb; }
.lbl { font: 11px "Liberation Sans", sans-serif; fill: #222; }
.axis { fill: none; stroke: #000; stroke-width: 1; }
.tick { font: 11px "Liberation Sans", sans-serif; fill: #2f3a50; }
.dots circle { cy: 404px; r: 5px; stroke: #111; stroke-width: 2; }
.cells rect { width: 10px; height: 10px; stroke: #000; stroke-width: 1; }
.r1 rect { y: 419.500px; }
.r2 rect { y: 439.500px; }
.r3 rect { y: 459.500px; }
.r4 rect { y: 479.500px; }
.s { fill: #078a07; }
.f { fill: #ff0000; }
.l { fill: #00ff22; }
.u { fill: #ffaa00; }
.q { fill: #808080; }
.n { fill: #ffffff; }

/* Scrollbar */
.scrollbar { width: 15px; flex: none; background: #f1f1f1; display: flex; flex-direction: column; align-items: center; }
.arrow { width: 0; height: 0; margin-top: 5px; border-left: 4px solid transparent; border-right: 4px solid transparent; border-bottom: 4px solid #505050; }
.thumb { width: 11px; height: 432px; margin-top: 155px; background: #c1c1c1; }
```
